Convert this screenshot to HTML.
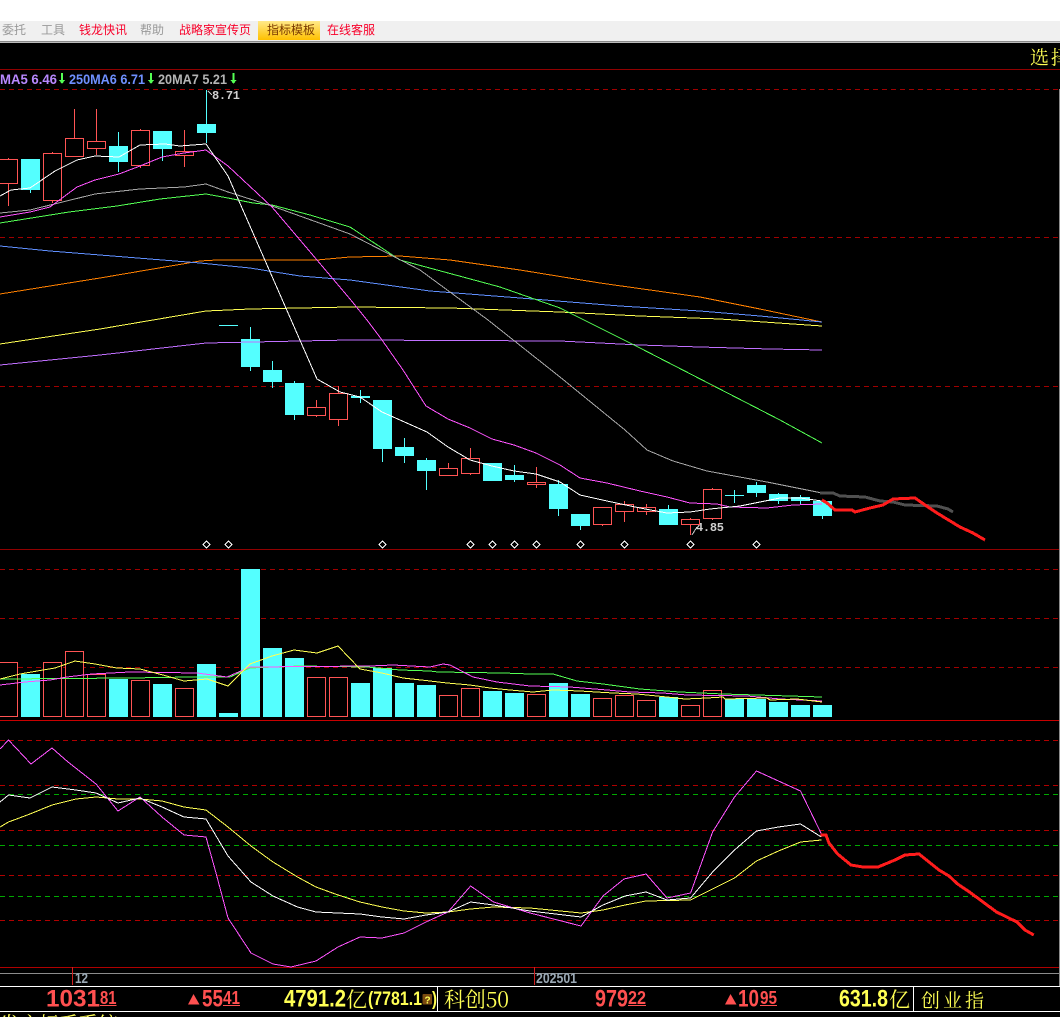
<!DOCTYPE html>
<html><head><meta charset="utf-8"><title>K线</title>
<style>
html,body{margin:0;padding:0;background:#000;width:1060px;height:1017px;overflow:hidden}
svg{display:block;position:absolute;left:0;top:0}
.m{font:12px "Noto Sans CJK SC","WenQuanYi Zen Hei",sans-serif}
.n{font-family:"Liberation Sans",sans-serif;font-weight:bold}
.s{font-family:"Noto Serif CJK SC","Liberation Serif",serif}
.r{fill:#ff5050}.y{fill:#ffff54}
</style></head><body>
<svg width="1060" height="1017" viewBox="0 0 1060 1017" xmlns="http://www.w3.org/2000/svg" shape-rendering="crispEdges">
<defs><linearGradient id="g" x1="0" y1="0" x2="0" y2="1"><stop offset="0" stop-color="#ffe98a"/><stop offset="1" stop-color="#ffc000"/></linearGradient></defs>
<rect width="1060" height="1017" fill="#000"/>
<rect width="1060" height="21" fill="#fff"/>
<rect y="21" width="1060" height="20" fill="#f0f0f0"/>
<rect y="41" width="1060" height="1" fill="#888"/>
<rect y="42" width="1060" height="1" fill="#bbb"/>
<rect x="258" y="21" width="62" height="19" fill="url(#g)"/>
<g class="m" shape-rendering="auto">
<text x="2" y="34" fill="#999">委托</text>
<text x="41" y="34" fill="#999">工具</text>
<text x="79" y="34" fill="#f8002a">钱龙快讯</text>
<text x="140" y="34" fill="#999">帮助</text>
<text x="179" y="34" fill="#f8002a">战略家宣传页</text>
<text x="267" y="34" fill="#7a3a00">指标模板</text>
<text x="327" y="34" fill="#f8002a">在线客服</text>
</g>
<g shape-rendering="auto">
<text class="s" x="1030" y="64" font-size="19" letter-spacing="2" fill="#ffff54">选择</text>
<g class="n" font-size="14">
<text x="0" y="84" textLength="57" lengthAdjust="spacingAndGlyphs" fill="#b888ff">MA5 6.46</text>
<text x="69" y="84" textLength="76" lengthAdjust="spacingAndGlyphs" fill="#6f90ff">250MA6 6.71</text>
<text x="158" y="84" textLength="69" lengthAdjust="spacingAndGlyphs" fill="#b4b4b4">20MA7 5.21</text>
</g>
<g font-family="Liberation Mono,monospace" font-size="12" font-weight="bold" fill="#d0d0d0">
<text x="212" y="99" textLength="28">8.71</text>
<text x="696" y="531" textLength="28">4.85</text>
</g>
</g>
<path d="M61 73h2v7h2l-3 4l-3-4h2ZM150 73h2v7h2l-3 4l-3-4h2ZM232.5 73h2v7h2l-3 4l-3-4h2Z" fill="#54ff54"/>
<!-- grid -->
<g fill="none" stroke="#a00000">
<path d="M0 69.5H1060M0 549.5H1060" stroke="#900000"/>
<path d="M0 720.5H1060" stroke="#c80000"/>
<path d="M0 967.5H1060" stroke="#b00000"/>
<g stroke-dasharray="5 4">
<path d="M0 89.5H1060M0 237.5H1060M0 386.5H1060M0 569.5H1060M0 618.5H1060M0 667.5H1060"/>
<path d="M0 740.5H1060M0 785.5H1060M0 830.5H1060M0 875.5H1060M0 920.5H1060" stroke="#b00000"/>
<path d="M0 794.5H1060M0 845.5H1060M0 896.5H1060" stroke="#00a800"/>
</g>
</g>
<path d="M0 973.5H1060" stroke="#8c8c8c"/>
<path d="M1059.5 89V986" stroke="#8c8c8c"/>
<!-- cyan wicks -->
<path fill="none" stroke="#54ffff" d="M30.5 159V193M118.5 132V172M162.5 131V161M206.5 90V143M250.5 327V371M272.5 361V388M294.5 381V420M360.5 390V403M382.5 400V462M404.5 438V463M426.5 458V490M492.5 463V481M514.5 465V482M558.5 480V516M580.5 514V530M668.5 505V525M734.5 490V503M756.5 482V497M778.5 493V504M800.5 495V504M822.5 501V519M219 325.5H238M351 397H370M725 495.5H744"/>
<!-- cyan bodies -->
<g fill="#54ffff">
<rect x="21" y="159" width="19" height="31"/><rect x="109" y="146" width="19" height="16"/><rect x="153" y="131" width="19" height="18"/><rect x="197" y="124" width="19" height="9"/>
<rect x="241" y="339" width="19" height="28"/><rect x="263" y="370" width="19" height="12"/><rect x="285" y="383" width="19" height="32"/>
<rect x="351" y="396" width="19" height="2"/><rect x="373" y="400" width="19" height="49"/><rect x="395" y="447" width="19" height="9"/><rect x="417" y="460" width="19" height="11"/>
<rect x="483" y="463" width="19" height="18"/><rect x="505" y="475" width="19" height="5"/><rect x="549" y="484" width="19" height="25"/><rect x="571" y="514" width="19" height="12"/>
<rect x="659" y="509" width="19" height="16"/><rect x="747" y="485" width="19" height="8"/><rect x="769" y="494" width="19" height="7"/><rect x="791" y="497" width="19" height="4"/><rect x="813" y="501" width="19" height="15"/>
</g>
<!-- red wicks -->
<path fill="none" stroke="#ff5454" d="M8.5 158V206M52.5 152V203M74.5 109V157M96.5 109V155M140.5 129V168M184.5 130V167M316.5 400V417M338.5 386V426M448.5 463V476M470.5 448V475M536.5 467V488M602.5 507V526M624.5 501V522M646.5 504V515M690.5 518V535M712.5 488V520"/>
<g fill="#000" stroke="#ff5454">
<rect x="-0.5" y="159.5" width="18" height="24"/><rect x="43.5" y="153.5" width="18" height="47"/><rect x="65.5" y="138.5" width="18" height="18"/><rect x="87.5" y="141.5" width="18" height="7"/><rect x="131.5" y="130.5" width="18" height="35"/><rect x="175.5" y="151.5" width="18" height="4"/>
<rect x="307.5" y="407.5" width="18" height="8"/><rect x="329.5" y="393.5" width="18" height="26"/><rect x="439.5" y="468.5" width="18" height="7"/><rect x="461.5" y="458.5" width="18" height="15"/><rect x="527.5" y="482.5" width="18" height="2"/>
<rect x="593.5" y="507.5" width="18" height="17"/><rect x="615.5" y="504.5" width="18" height="7"/><rect x="637.5" y="507.5" width="18" height="4"/><rect x="681.5" y="519.5" width="18" height="5"/><rect x="703.5" y="489.5" width="18" height="29"/>
</g>
<!-- MAs -->
<g fill="none">
<polyline stroke="#ffff54" points="0,344 100,329 206,311 250,309 350,307 450,308 560,312 640,316 720,319 822,326"/>
<polyline stroke="#c070ff" points="0,365 100,355 206,343 300,341 350,340 560,341 640,345 700,347 770,349 822,350"/>
<polyline stroke="#ff8000" points="0,294 100,278 200,261 217,260 317,260 350,257 400,256 450,260 520,270 600,283 700,297 760,309 822,322"/>
<polyline stroke="#6090ff" points="0,246 50,251 100,255 150,259 200,263 250,268 300,276 350,280 430,291 520,298 620,306 700,311 760,316 822,322"/>
<polyline stroke="#54ff54" points="0,223 69,212 117,206 160,199 206,194 228,198 253,203 272,205 310,215 350,227 400,260 500,287 560,308 640,348 780,420 822,443"/>
<polyline stroke="#a8a8a8" points="0,213 30,210 95,194 140,189 184,187 206,184 228,192 272,206 350,234 420,270 488,320 560,377 625,430 647,450 673,461 707,471 767,482 822,493"/>
<polyline stroke="#ff54ff" points="0,217 30,212 50,207 77,187 95,180 119,174 140,166 162,157 184,153 206,150 228,166 272,207 317,260 350,299 367,320 382,340 403,370 426,406 448,419 470,428 492,439 514,445 536,453 560,465 580,478 607,483 640,491 667,497 690,503 717,504 730,507 767,508 793,505 822,504"/>
<polyline stroke="#fff" points="0,196 11,190 30,188 55,171 77,160 95,156 119,157 140,145 165,144 180,146 206,144 228,176 317,379 340,392 360,397 382,412 427,432 448,447 470,460 492,466 514,471 536,474 560,482 580,495 607,501 640,508 667,513 690,512 710,509 740,506 760,502 780,498 800,498 822,501"/>
<polyline stroke="#505050" stroke-width="3" points="820,493 833,493 840,496 865,497 880,501 893,502 905,505 937,506 948,509 953,512"/>
<polyline stroke="#ff1c1c" stroke-width="3" points="822,500 827,503 835,510 852,510 855,512 870,508 883,505 893,499 915,498 928,507 937,513 960,527 973,533 985,540"/>
<path stroke="#c8c8c8" d="M208 91L212 95M692 535L697 527"/>
</g>
<!-- diamonds -->
<g fill="#000" stroke="#fff"><path d="M206.5 541L210 544.5L206.5 548L203 544.5ZM228.5 541L232 544.5L228.5 548L225 544.5ZM382.5 541L386 544.5L382.5 548L379 544.5ZM470.5 541L474 544.5L470.5 548L467 544.5ZM492.5 541L496 544.5L492.5 548L489 544.5ZM514.5 541L518 544.5L514.5 548L511 544.5ZM536.5 541L540 544.5L536.5 548L533 544.5ZM580.5 541L584 544.5L580.5 548L577 544.5ZM624.5 541L628 544.5L624.5 548L621 544.5ZM690.5 541L694 544.5L690.5 548L687 544.5ZM756.5 541L760 544.5L756.5 548L753 544.5Z"/></g>
<!-- volume -->
<g fill="#54ffff">
<rect x="21" y="674" width="19" height="43"/><rect x="109" y="679" width="19" height="38"/><rect x="153" y="684" width="19" height="33"/><rect x="197" y="664" width="19" height="53"/><rect x="219" y="713" width="19" height="4"/><rect x="241" y="569" width="19" height="148"/><rect x="263" y="648" width="19" height="69"/><rect x="285" y="658" width="19" height="59"/>
<rect x="351" y="683" width="19" height="34"/><rect x="373" y="668" width="19" height="49"/><rect x="395" y="683" width="19" height="34"/><rect x="417" y="685" width="19" height="32"/><rect x="483" y="691" width="19" height="26"/><rect x="505" y="693" width="19" height="24"/><rect x="549" y="683" width="19" height="34"/><rect x="571" y="694" width="19" height="23"/><rect x="659" y="697" width="19" height="20"/><rect x="725" y="699" width="19" height="18"/><rect x="747" y="699" width="19" height="18"/><rect x="769" y="702" width="19" height="15"/><rect x="791" y="705" width="19" height="12"/><rect x="813" y="705" width="19" height="12"/>
</g>
<g fill="#000" stroke="#ff5454">
<rect x="-0.5" y="662.5" width="18" height="54"/><rect x="43.5" y="662.5" width="18" height="54"/><rect x="65.5" y="651.5" width="18" height="65"/><rect x="87.5" y="674.5" width="18" height="42"/><rect x="131.5" y="680.5" width="18" height="36"/><rect x="175.5" y="688.5" width="18" height="28"/><rect x="307.5" y="677.5" width="18" height="39"/><rect x="329.5" y="677.5" width="18" height="39"/><rect x="439.5" y="695.5" width="18" height="21"/><rect x="461.5" y="688.5" width="18" height="28"/><rect x="527.5" y="694.5" width="18" height="22"/><rect x="593.5" y="698.5" width="18" height="18"/><rect x="615.5" y="695.5" width="18" height="21"/><rect x="637.5" y="700.5" width="18" height="16"/><rect x="681.5" y="705.5" width="18" height="11"/><rect x="703.5" y="690.5" width="18" height="26"/>
</g>
<g fill="none">
<polyline stroke="#54ff54" points="0,679 130,678 190,677 230,677 250,668 300,666 367,667 400,670 430,671 438,672 503,673 530,674 553,674 577,681 603,684 640,689 680,692 723,694 790,696 822,697"/>
<polyline stroke="#ff54ff" points="0,685 25,682 50,680 67,677 92,674 130,672 197,673 227,677 250,667 370,666 393,665 430,667 443,664 450,665 473,677 497,682 530,686 570,687 607,690 630,692 663,693 687,695 747,696 780,699 822,701"/>
<polyline stroke="#ffff54" points="0,679 20,674 43,670 55,668 75,661 95,664 117,668 140,669 163,675 184,681 207,679 228,686 250,664 272,656 294,650 317,653 338,646 360,669 382,673 403,678 430,681 447,683 470,685 490,688 510,690 533,692 553,690 580,691 613,693 637,694 657,696 667,697 685,699 707,698 723,697 725,699 767,698 770,700 797,699 822,702"/>
<!-- oscillator -->
<polyline stroke="#ffff54" points="0,827 8.5,822 30,814 52,805 76,799 96,797 118,799 140,799 162,801 184,807 206,810 228,827 251,846 273,862 297.5,877 316,887 338,895 360,902 382,907 404,911 426,913 448,912 470.6,909 493.6,907 530,908 581,913 603,910 625,905 646,901 690.6,900 712.6,889 734.5,878 756.5,861 778.5,851 800.5,842 821.4,840"/>
<polyline stroke="#ff54ff" points="0,749 8.5,740 31,764 52,748 68,762 96,784 118,811 140,797 162,817 184,835 206,837 216,873 228,918 251,953 273,964 291,967 316,961 338,947 360,937 382,938 404,933 426,922 448,912 470.6,886 493.6,902 530,913 581,926 603,896 624,879 646,874 667,898 690.6,893 712.6,832 734.5,797 756.5,771 800.5,791 821.4,834"/>
<polyline stroke="#fff" points="0,802 8.5,795 30,798 52,787 76,790 96,793 118,803 140,798 162,807 184,817 206,819 228,856 251,882 273,896 297.5,907 316,912 338,913 360,914 382,917 404,919 426,915 448,912 470.6,902 493.6,905 530,911 581,917 603,905 625,896 646,892 667,900 690.6,898 712.6,872 734.5,850 756.5,831 778.5,827 800.5,824 821.4,837"/>
<polyline stroke="#ff1c1c" stroke-width="3" points="820.7,835 826,835 829,843 837.6,854 851,865 863,867 878,867 895,860 905,855 919,854 939,870 949,876 957.6,884 969.5,892 983,902 996.5,912 1017,922 1025,930 1033.7,935"/>
</g>
<path d="M72.5 967V985M534.5 967V985" stroke="#d02020"/>
<g shape-rendering="auto" font-family="Liberation Sans,sans-serif" font-size="15" font-weight="bold" fill="#9aa8b4">
<text x="75" y="983" textLength="13" lengthAdjust="spacingAndGlyphs">12</text>
<text x="536" y="983" textLength="41" lengthAdjust="spacingAndGlyphs">202501</text>
</g>
<!-- bottom bar -->
<rect y="986" width="1060" height="1" fill="#fff"/>
<rect y="1011" width="1060" height="1" fill="#fff"/>
<rect x="437" y="986" width="1" height="25" fill="#fff"/>
<rect x="913" y="986" width="1" height="25" fill="#fff"/>
<g shape-rendering="auto">
<g class="n r">
<text x="46" y="1006.5" font-size="24" textLength="54" lengthAdjust="spacingAndGlyphs">1031</text>
<text x="100" y="1004" font-size="18" textLength="16.5" lengthAdjust="spacingAndGlyphs">81</text>
<text x="202" y="1006.5" font-size="24" textLength="21" lengthAdjust="spacingAndGlyphs">55</text>
<text x="223" y="1004" font-size="18" textLength="17" lengthAdjust="spacingAndGlyphs">41</text>
<text x="595" y="1006.5" font-size="24" textLength="33" lengthAdjust="spacingAndGlyphs">979</text>
<text x="628" y="1004" font-size="18" textLength="18" lengthAdjust="spacingAndGlyphs">22</text>
<text x="738" y="1006.5" font-size="24" textLength="21" lengthAdjust="spacingAndGlyphs">10</text>
<text x="760" y="1004" font-size="18" textLength="17" lengthAdjust="spacingAndGlyphs">95</text>
</g>
<g class="n y">
<text x="284" y="1006.5" font-size="24" textLength="62" lengthAdjust="spacingAndGlyphs">4791.2</text>
<text x="368" y="1005" font-size="19" textLength="54" lengthAdjust="spacingAndGlyphs">(7781.1</text>
<text x="432" y="1005" font-size="19" textLength="5" lengthAdjust="spacingAndGlyphs">)</text>
<text x="839" y="1006.5" font-size="24" textLength="49" lengthAdjust="spacingAndGlyphs">631.8</text>
</g>
<g class="s y">
<text x="346" y="1007" font-size="21">亿</text>
<text x="889" y="1007" font-size="21">亿</text>
<text x="444" y="1007" font-size="21" textLength="65">科创50</text>
<text x="921" y="1007" font-size="19" textLength="63">创业指</text>
<text x="0" y="1031" font-size="20" textLength="118">发文标手系统</text>
</g>
<rect x="422.5" y="994" width="9.5" height="10.5" rx="1" fill="#7a4a10"/>
<text class="n y" x="424.5" y="1003.5" font-size="10">?</text>
</g>
<g fill="none" stroke="#ff5050"><path d="M100 1005.5H116.5M223 1005.5H240M628 1005.5H646M760 1005.5H777"/></g>
<g fill="#ff5050" shape-rendering="auto"><polygon points="193.5,994 199.5,1004.5 188,1004.5"/><polygon points="730.5,994 736.5,1004.5 725,1004.5"/></g>
</svg>
</body></html>
